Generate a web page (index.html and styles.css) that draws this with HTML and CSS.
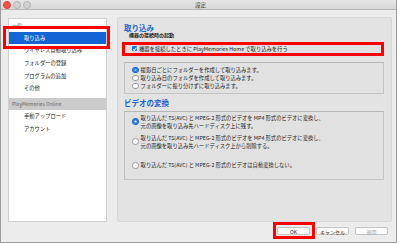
FILE: index.html
```html
<!DOCTYPE html>
<html lang="ja">
<head>
  <meta charset="UTF-8" />
  <title>設定</title>
  <link rel="stylesheet" href="styles.css">
</head>
<body>
  <div class="window">
    <div class="titlebar">
      <div class="lights">
        <span class="light red"></span>
        <span class="light"></span>
        <span class="light"></span>
      </div>
      <div class="title">設定</div>
    </div>

    <div class="main">
      <ul class="sidebar">
        <li class="group">一般</li>
        <li class="item selected marked">取り込み</li>
        <li class="item">ワイヤレス自動取り込み</li>
        <li class="item">フォルダーの登録</li>
        <li class="item">プログラムの追加</li>
        <li class="item">その他</li>
        <li class="group shaded">PlayMemories Online</li>
        <li class="item">手動アップロード</li>
        <li class="item">アカウント</li>
      </ul>

      <div class="panel">
        <h2>取り込み</h2>
        <h3>機器の接続時の起動</h3>
        <div class="box check-box marked">
          <label class="row"><span class="checkbox"></span>機器を接続したときに PlayMemories Home で取り込みを行う</label>
        </div>

        <div class="box folders">
          <label class="row"><span class="radio on"></span>撮影日ごとにフォルダーを作成して取り込みます。</label>
          <label class="row"><span class="radio"></span>取り込み日のフォルダを作成して取り込みます。</label>
          <label class="row"><span class="radio"></span>フォルダーに振り分けずに取り込みます。</label>
        </div>

        <h2 class="video">ビデオの変換</h2>
        <div class="box video-box">
          <label class="row tall"><span class="radio on"></span><span>取り込んだ TS(AVC) と MPEG-2 形式のビデオを MP4 形式のビデオに変換し、<br>元の画像を取り込み先ハードディスク上に残す。</span></label>
          <label class="row tall second"><span class="radio"></span><span>取り込んだ TS(AVC) と MPEG-2 形式のビデオを MP4 形式のビデオに変換し、<br>元の画像を取り込み先ハードディスク上から削除する。</span></label>
          <label class="row third"><span class="radio"></span>取り込んだ TS(AVC) と MPEG-2 形式のビデオは自動変換しない。</label>
        </div>
      </div>
    </div>

    <div class="footer">
      <button class="btn marked">OK</button>
      <button class="btn">キャンセル</button>
      <button class="btn disabled">適用</button>
    </div>
  </div>
</body>
</html>
```

FILE: styles.css
```css
body {
  margin: 0;
  width: 400px;
  height: 244px;
  background: #fff;
  font-family: "Noto Sans CJK JP", "Noto Sans", sans-serif;
  color: #222;
  overflow: hidden;
}

.window {
  width: 397px;
  height: 243px;
  box-sizing: border-box;
  background: #ececec;
  border: 1px solid #9c9c9c;
  border-top: none;
}

/* title bar */
.titlebar {
  height: 9px;
  background: linear-gradient(#e6e6e6, #d6d6d6);
  border-bottom: 1px solid #b8b8b8;
  display: flex;
  align-items: center;
}

.lights {
  display: flex;
  gap: 2px;
  padding-left: 2px;
}

.light {
  width: 6px;
  height: 6px;
  border-radius: 50%;
  background: #d0d0d0;
  border: 0.5px solid #b5b5b5;
}

.light.red {
  background: #f2524a;
  border-color: #d9433c;
}

.title {
  flex: 1;
  text-align: center;
  font-size: 5.5px;
  color: #444;
  margin-right: 26px;
}

/* main area */
.main {
  display: flex;
  gap: 10px;
  padding: 7px 4px 0 7px;
}

.sidebar {
  list-style: none;
  margin: 1px 0 0;
  padding: 0;
  width: 99px;
  height: 204px;
  box-sizing: border-box;
  background: #fff;
  border: 1px solid #cfcfcf;
}

.sidebar li {
  height: 12.7px;
  line-height: 12.7px;
  font-size: 5.3px;
  white-space: nowrap;
}

.sidebar .group {
  padding-left: 3px;
  color: #777;
  font-size: 5px;
}

.sidebar .group.shaded {
  background: #cbcbcb;
  color: #666;
  margin-top: 2.5px;
}

.sidebar .item {
  padding-left: 15px;
}

.sidebar .selected {
  background: #1564d6;
  color: #fff;
}

.panel {
  flex: 1;
  height: 205px;
  box-sizing: border-box;
  background: #e3e3e3;
  border: 1px solid #d9d9d9;
  border-radius: 2px;
  padding: 0 7px 0 6px;
}

h2,
h3 {
  font-family: "Liberation Sans", "Noto Sans CJK JP", sans-serif;
  font-weight: bold;
}

h2 {
  margin: 6.8px 0 0;
  font-size: 7.5px;
  line-height: 8px;
  color: #1a66d0;
}

h2.video {
  margin-top: 6px;
}

h3 {
  margin: 0.4px 0 0 5px;
  font-size: 5px;
  line-height: 5.5px;
  color: #222;
}

.box {
  border: 1px solid #c3c3c3;
  border-top-color: #b6b6b6;
  border-radius: 1px;
  background: #e1e1e1;
  padding-left: 7px;
}

.row {
  display: flex;
  align-items: center;
  gap: 2px;
  height: 8px;
  font-size: 5.3px;
  line-height: 8px;
  white-space: nowrap;
}

.check-box {
  margin-top: 5px;
  height: 10px;
  box-sizing: border-box;
  display: flex;
  align-items: center;
}

.checkbox {
  width: 5px;
  height: 5px;
  border-radius: 1px;
  background: #1a6ee0;
  position: relative;
  flex: none;
}

.checkbox::after {
  content: "";
  position: absolute;
  left: 1.6px;
  top: 0.5px;
  width: 1.2px;
  height: 2.6px;
  border: solid #fff;
  border-width: 0 0.8px 0.8px 0;
  transform: rotate(40deg);
}

.folders {
  margin-top: 8px;
  padding-top: 3.5px;
  padding-bottom: 3px;
}

.radio {
  width: 4.6px;
  height: 4.6px;
  border-radius: 50%;
  background: #fff;
  border: 0.6px solid #999;
  flex: none;
}

.radio.on {
  background: #1a6ee0;
  border-color: #1a62c8;
  box-shadow: inset 0 0 0 1.4px #1a6ee0, inset 0 0 0 3px #fff;
}

.video-box {
  margin-top: 2.5px;
  height: 69px;
  box-sizing: border-box;
  padding-top: 2px;
}

.row.tall {
  height: 16px;
}

.row.second {
  margin-top: 4px;
}

.row.third {
  margin-top: 11.7px;
}

/* footer buttons */
.footer {
  display: flex;
  justify-content: flex-end;
  gap: 6px;
  padding: 5px 8px 0 0;
}

.btn {
  width: 33px;
  height: 8px;
  padding: 0;
  font-family: inherit;
  font-size: 5px;
  line-height: 7px;
  color: #222;
  background: #fbfbfb;
  border: 0.5px solid #c4c4c4;
  border-radius: 2px;
}

.btn.disabled {
  color: #aaa;
}

/* red annotation frames */
.marked {
  position: relative;
}

.marked::before {
  content: "";
  position: absolute;
  border: 3px solid #ff0000;
  pointer-events: none;
}

.sidebar .marked::before {
  left: -6px;
  right: -4px;
  top: -5.7px;
  bottom: -4.6px;
}

.check-box.marked::before {
  left: -3.3px;
  right: -1px;
  top: -3px;
  bottom: -3px;
}

.btn.marked::before {
  left: -5.5px;
  right: -6px;
  top: -6.5px;
  bottom: -4.5px;
}
```
